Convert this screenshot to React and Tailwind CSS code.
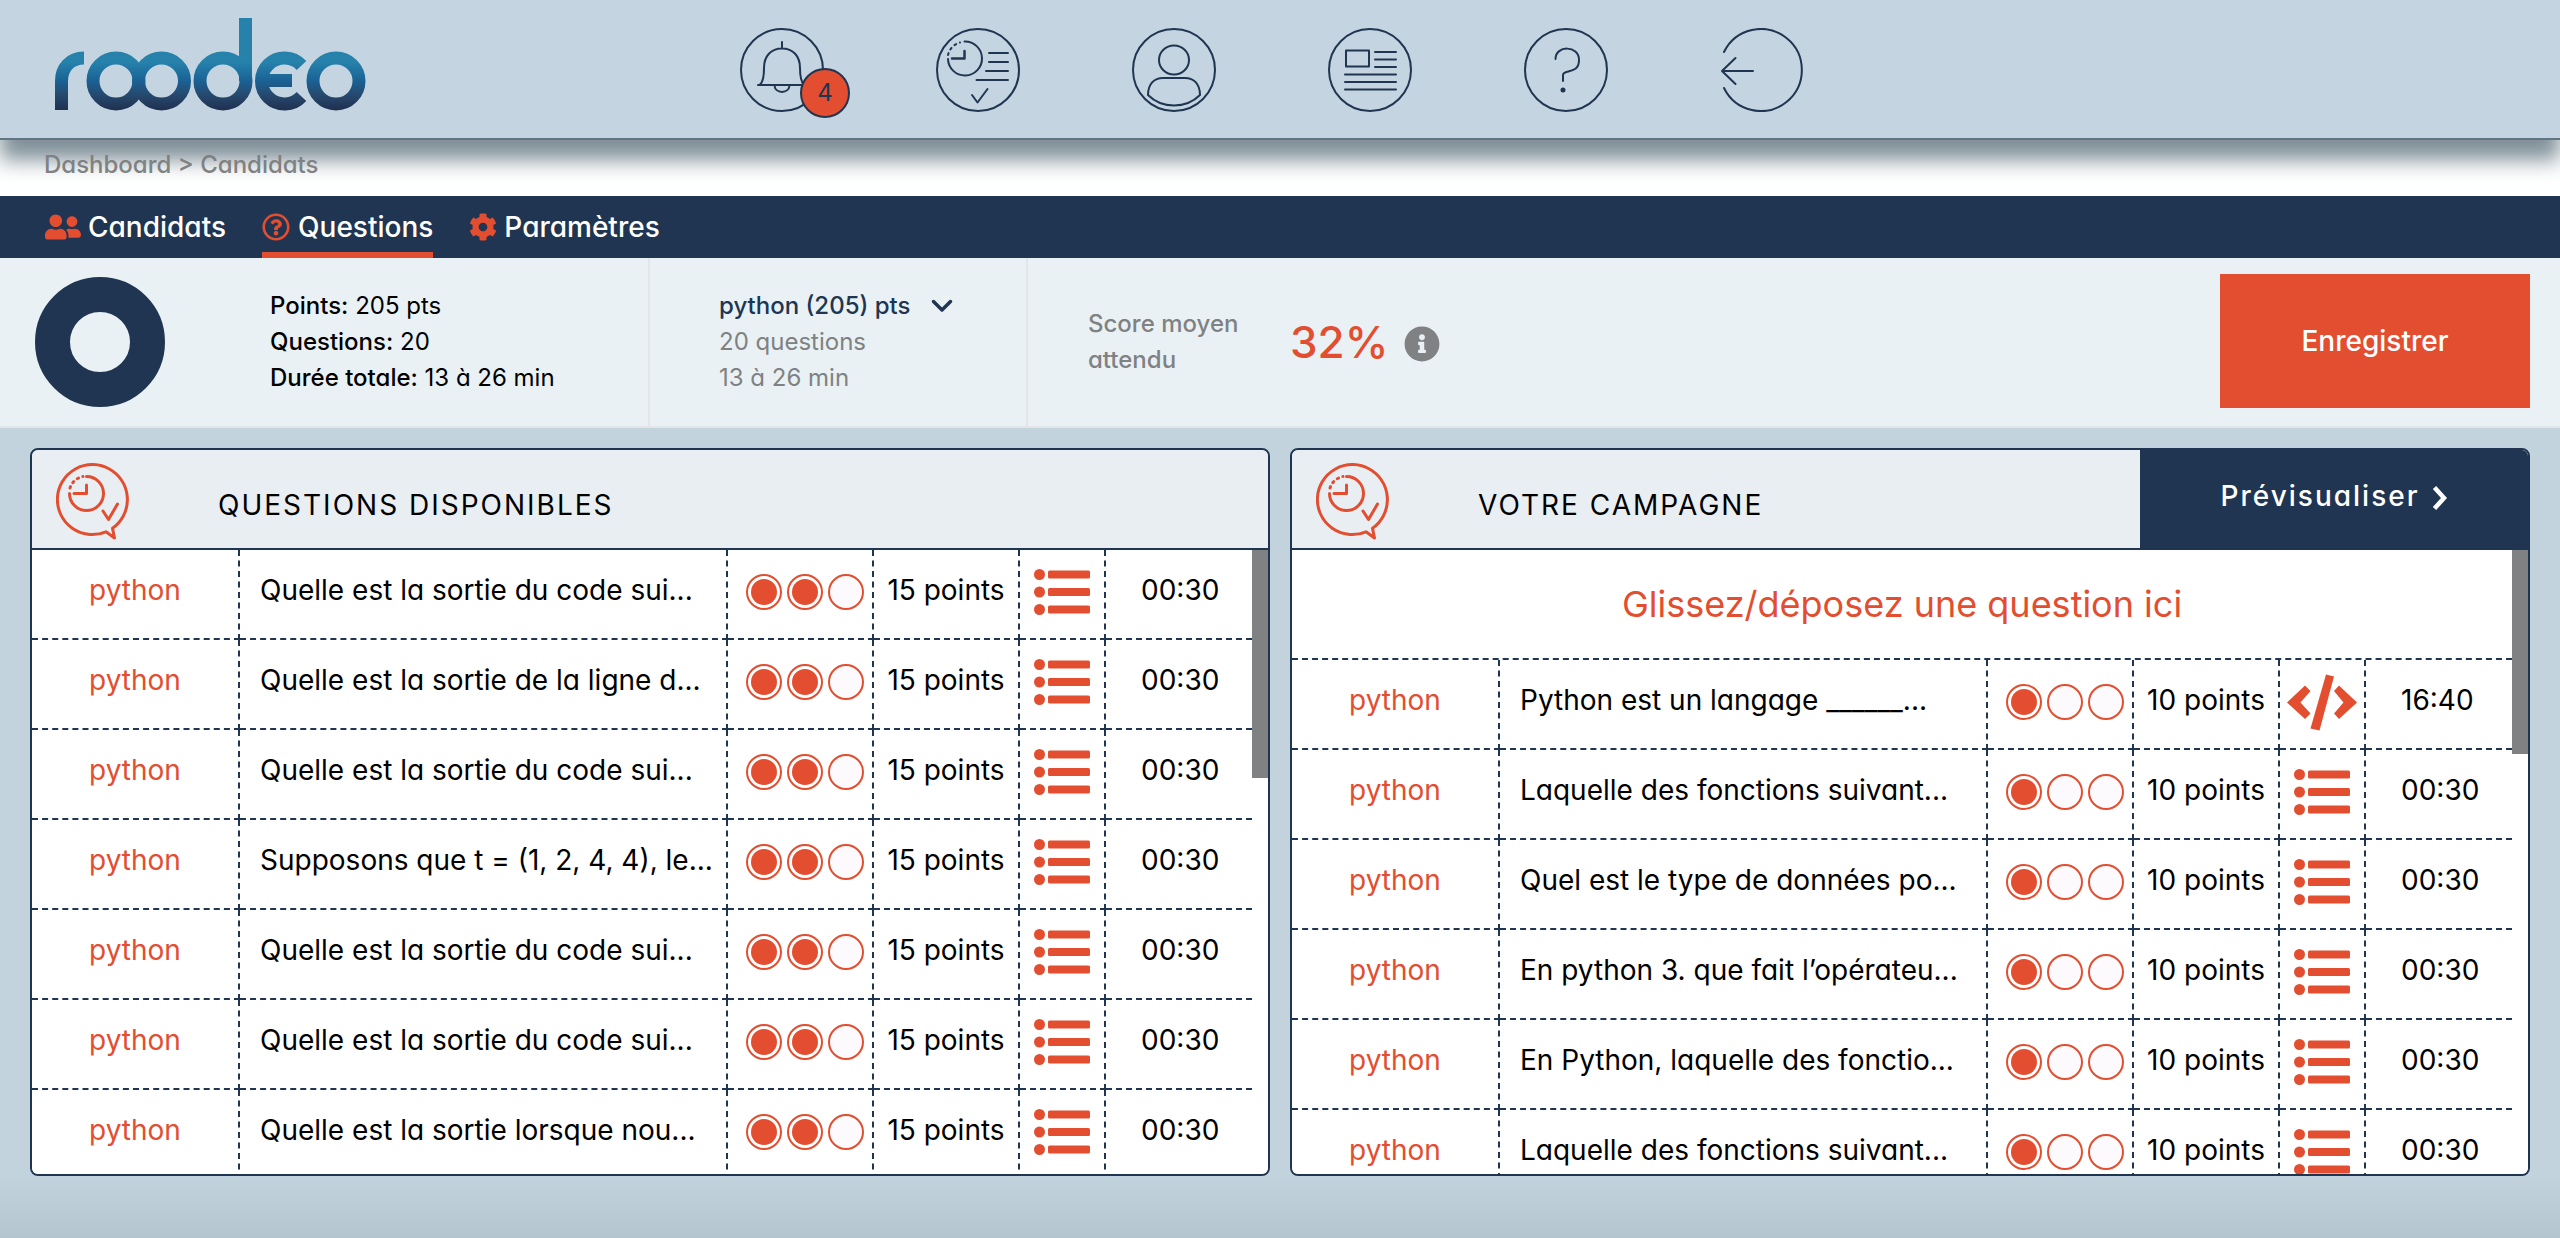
import React from "react";
import { FaCog, FaInfoCircle, FaUserFriends, FaRegQuestionCircle } from "react-icons/fa";

const availableQuestions = [
  "Quelle est la sortie du code sui...",
  "Quelle est la sortie de la ligne d...",
  "Quelle est la sortie du code sui...",
  "Supposons que t = (1, 2, 4, 4), le...",
  "Quelle est la sortie du code sui...",
  "Quelle est la sortie du code sui...",
  "Quelle est la sortie lorsque nou...",
].map((text) => ({ text, level: 2, points: "15 points", type: "list", time: "00:30" }));

const campaignQuestions = [
  { text: "Python est un langage ______...", type: "code", time: "16:40" },
  { text: "Laquelle des fonctions suivant...", type: "list", time: "00:30" },
  { text: "Quel est le type de données po...", type: "list", time: "00:30" },
  { text: "En python 3. que fait l’opérateu...", type: "list", time: "00:30" },
  { text: "En Python, laquelle des fonctio...", type: "list", time: "00:30" },
  { text: "Laquelle des fonctions suivant...", type: "list", time: "00:30" },
].map((q) => ({ ...q, level: 1, points: "10 points" }));

function Logo() {
  return (
    <svg viewBox="0 0 312 94" className="h-[94px] w-[312px]" role="img" aria-label="roodeo">
      <defs>
        <linearGradient id="logoFill" gradientUnits="userSpaceOnUse" x1="0" y1="34" x2="0" y2="92">
          <stop offset="0.2" stopColor="#2681ab" />
          <stop offset="0.5" stopColor="#1a6396" />
          <stop offset="0.75" stopColor="#264a6f" />
          <stop offset="1" stopColor="#203252" />
        </linearGradient>
      </defs>
      <g fill="none" stroke="url(#logoFill)" strokeWidth="13">
        <path d="M7.5 93V64C7.5 51 16 41 30 41" />
        <circle cx="62" cy="64" r="23" />
        <circle cx="107.5" cy="64" r="23" />
        <circle cx="169" cy="64" r="23" />
        <path d="M247.5 48.500A23 23 0 1 0 247.5 79.500" />
        <circle cx="282" cy="64" r="23" />
      </g>
      <rect x="185" y="1" width="13" height="63" fill="url(#logoFill)" />
      <rect x="206" y="57" width="32" height="13" fill="url(#logoFill)" />
    </svg>
  );
}

function RoundIcon({ children, open = false }) {
  return (
    <svg
      viewBox="0 0 84 84"
      className="size-[84px]"
      fill="none"
      stroke="#203551"
      strokeWidth="2"
      strokeLinecap="round"
      strokeLinejoin="round"
      aria-hidden="true"
    >
      {open ? <path d="M4 24A41 41 0 1 1 4 60" /> : <circle cx="42" cy="42" r="41" />}
      {children}
    </svg>
  );
}

const headerIcons = [
  {
    label: "Notifications",
    badge: "4",
    art: (
      <>
        <path d="M42 14V20M18 57H66M42 20.5C31 20.5 24 28 24 40C24 50 23 54 20 56.5M42 20.5C53 20.5 60 28 60 40C60 50 61 54 64 56.5" />
        <path d="M34.5 57.5C35 66 49 66 49.5 57.5" />
      </>
    ),
  },
  {
    label: "Tests",
    art: (
      <>
        <path d="M28.5 13.5A17 17 0 1 1 12 31" />
        <path d="M12 27A17 17 0 0 1 24 14.5" strokeDasharray="2 4" />
        <path d="M28.5 23V30.5H16" strokeWidth="2.5" />
        <path d="M53 25H72M53 34H72M50 43H72M40.5 52H72" />
        <path d="M36 67L41.5 74.5L51.5 61" />
      </>
    ),
  },
  {
    label: "Profil",
    art: (
      <>
        <ellipse cx="42" cy="32" rx="15" ry="14.5" />
        <path d="M16 67C16 56 22 50 31 50H53C62 50 68 56 68 67C54 81 30 81 16 67Z" />
      </>
    ),
  },
  {
    label: "Actualités",
    art: (
      <path d="M18 22.5H41V38.5H18ZM47 24H68M47 31.5H68M47 39H68M17 46.5H68M17 54H68M17 61.5H68" />
    ),
  },
  {
    label: "Aide",
    art: (
      <>
        <path d="M31.5 31C31.5 17 55 17 55 32C55 47 39 41 39 47V53" />
        <circle cx="39" cy="62" r="1.5" fill="#203551" />
      </>
    ),
  },
  {
    label: "Déconnexion",
    open: true,
    art: <path d="M33 43H2M15.5 30L2 43L15.5 56" />,
  },
];

function BubbleIcon() {
  return (
    <svg
      viewBox="0 0 74 78"
      className="h-[78px] w-[74px]"
      fill="none"
      stroke="#e24e2f"
      strokeWidth="3"
      strokeLinecap="round"
      strokeLinejoin="round"
      aria-hidden="true"
    >
      <path d="M50 69.8A35 35 0 1 1 56.5 66.2L58.5 76Z" />
      <path d="M30.5 14.5A17 17 0 1 1 13.5 31.5" />
      <path d="M14 26A17 17 0 0 1 27 14.5" strokeDasharray="1.5 4.5" />
      <path d="M30.5 23V31.5H18M47 49L52.5 57.5L61.5 42" />
    </svg>
  );
}

function ListIcon() {
  return (
    <svg viewBox="0 0 56 46" className="h-[46px] w-14" fill="#e24e2f" role="img" aria-label="Choix multiple">
      {[5.5, 23, 40.5].map((y) => (
        <g key={y}>
          <circle cx="5.5" cy={y} r="5.5" />
          <rect x="14" y={y - 4} width="42" height="8" rx="1.5" />
        </g>
      ))}
    </svg>
  );
}

function CodeIcon() {
  return (
    <svg viewBox="0 0 70 58" className="h-[58px] w-[70px]" fill="#e24e2f" role="img" aria-label="Code">
      <path d="M39 1.5L47 3.5L32.5 57.5L23.5 55.5Z" />
      <path d="M18 12.5L23.5 18L13.5 29.5L23.5 40.5L18 46L0 29.5Z" />
      <path d="M52 12.5L47 18L56.5 29.5L47 40.5L52 46L70 29.5Z" />
    </svg>
  );
}

function Level({ value }) {
  return (
    <div className="flex items-center gap-[5px]" role="img" aria-label={`Difficulté ${value} sur 3`}>
      {[1, 2, 3].map((n) => (
        <span
          key={n}
          className={
            n <= value
              ? "flex size-9 items-center justify-center rounded-full border-2 border-[#e24e2f] bg-white"
              : "flex size-9 items-center justify-center rounded-full border-2 border-[#e24e2f] bg-[#fcfafc]"
          }
        >
          {n <= value && <span className="size-[26px] rounded-full bg-[#e24e2f]" />}
        </span>
      ))}
    </div>
  );
}

const cell = "h-[90px] border-b-2 border-r-2 border-dashed border-[#203551] p-0";

function QuestionTable({ label, rows, dropText }) {
  return (
    <div className="flex min-h-0 flex-1 items-start overflow-hidden bg-white">
      <table
        aria-label={label}
        className="min-w-0 flex-1 table-fixed border-separate border-spacing-0 text-[28px] leading-[42px] whitespace-nowrap"
      >
        <colgroup>
          <col className="w-[208px]" />
          <col />
          <col className="w-[146px]" />
          <col className="w-[146px]" />
          <col className="w-[86px]" />
          <col className="w-[146px]" />
        </colgroup>
        <tbody>
          {dropText && (
            <tr>
              <td
                colSpan={6}
                className="h-[110px] border-b-2 border-dashed border-[#203551] p-0 text-center text-4xl text-[#e24e2f]"
              >
                {dropText}
              </td>
            </tr>
          )}
          {rows.map((row, i) => (
            <tr key={i}>
              <td className={`${cell} pb-2 text-center text-[#e24e2f]`}>python</td>
              <td className={`${cell} overflow-hidden pb-2 pl-5`}>{row.text}</td>
              <td className={`${cell} pb-1 pl-[18px]`}>
                <Level value={row.level} />
              </td>
              <td className={`${cell} pb-2 text-center`}>{row.points}</td>
              <td className={`${cell} pb-1`}>
                <div className="flex justify-center">{row.type === "code" ? <CodeIcon /> : <ListIcon />}</div>
              </td>
              <td className="h-[90px] border-b-2 border-dashed border-[#203551] p-0 pb-2 pl-[35px]">{row.time}</td>
            </tr>
          ))}
        </tbody>
      </table>
      <div className={dropText ? "h-[204px] w-4 bg-[#808182]" : "h-[228px] w-4 bg-[#808182]"} />
    </div>
  );
}

function Panel({ title, action, children }) {
  return (
    <section className="flex min-h-0 min-w-0 flex-1 flex-col overflow-hidden rounded-lg border-2 border-[#203551]">
      <header className="flex h-[100px] shrink-0 items-stretch border-b-2 border-[#203551] bg-[#e9eef2]">
        <div className="flex flex-1 items-start pt-3 pl-6">
          <BubbleIcon />
          <h2 className="mt-[22px] ml-[88px] text-[28px] leading-[42px] tracking-[2px]">{title}</h2>
        </div>
        {action}
      </header>
      {children}
    </section>
  );
}

const tabs = [
  { label: "Candidats", Icon: FaUserFriends, size: "size-9" },
  { label: "Questions", Icon: FaRegQuestionCircle, size: "size-7", active: true },
  { label: "Paramètres", Icon: FaCog, size: "size-7" },
];

export default function App() {
  return (
    <div className="flex h-screen flex-col bg-[#c2d3dd] font-[Inter,sans-serif] text-black [font-feature-settings:'cv11']">
      <header className="relative z-10 flex h-[140px] shrink-0 items-start border-b-2 border-[#5f7485] bg-[#c4d5e1] shadow-[0_20px_20px_0_#7f8f98]">
        <a href="#accueil" className="mt-[17px] ml-[54px]">
          <Logo />
        </a>
        <nav aria-label="Menu principal" className="mt-7 ml-[374px] flex gap-28">
          {headerIcons.map(({ label, art, open, badge }) => (
            <a key={label} href="#menu" aria-label={label} className="relative">
              <RoundIcon open={open}>{art}</RoundIcon>
              {badge && (
                <span className="absolute top-10 left-[60px] flex size-[50px] items-center justify-center rounded-full border-2 border-[#203551] bg-[#e24e2f] text-2xl text-[#203551]">
                  {badge}
                </span>
              )}
            </a>
          ))}
        </nav>
      </header>

      <div className="h-14 shrink-0 bg-white">
        <div className="relative z-20 pt-[7px] pl-11 text-2xl leading-9 font-medium text-[#808182]">
          <a href="#dashboard">Dashboard</a> &gt; <a href="#candidats">Candidats</a>
        </div>
      </div>

      <nav
        aria-label="Campagne"
        className="relative z-20 flex h-[62px] shrink-0 gap-9 bg-[#203551] pl-[45px] text-[28px] font-medium text-white"
      >
        {tabs.map(({ label, Icon, size, active }) => (
          <a
            key={label}
            href="#onglet"
            aria-current={active ? "page" : undefined}
            className={
              active
                ? "flex items-center gap-2 border-b-[6px] border-[#e24e2f] pt-1.5"
                : "flex items-center gap-[7px]"
            }
          >
            <Icon className={`${size} text-[#e24e2f]`} aria-hidden="true" />
            {label}
          </a>
        ))}
      </nav>

      <section className="flex h-[170px] shrink-0 border-b-2 border-[#e3e5e6] bg-[#e9f1f4] text-2xl leading-9">
        <div className="flex w-[650px] items-center border-r-2 border-[#e3e5e6] pl-[35px]">
          <svg viewBox="0 0 130 130" className="size-[130px]" role="img" aria-label="Répartition des points">
            <circle cx="65" cy="65" r="47.5" fill="none" stroke="#203551" strokeWidth="35" />
          </svg>
          <div className="ml-[105px]">
            <p><span className="font-medium">Points:</span> 205 pts</p>
            <p><span className="font-medium">Questions:</span> 20</p>
            <p><span className="font-medium">Durée totale:</span> 13 à 26 min</p>
          </div>
        </div>
        <div className="flex w-[378px] flex-col justify-center border-r-2 border-[#e3e5e6] pl-[69px] text-[#808182]">
          <label className="flex items-center gap-5 font-medium text-[#203551]">
            <select aria-label="Technologie" className="appearance-none bg-transparent">
              <option>python (205) pts</option>
            </select>
            <svg viewBox="0 0 22 14" className="h-3.5 w-[22px]" fill="none" stroke="#203551" strokeWidth="3.5" strokeLinecap="round" strokeLinejoin="round" aria-hidden="true">
              <path d="M2.5 2.5L11 11L19.5 2.5" />
            </svg>
          </label>
          <p>20 questions</p>
          <p>13 à 26 min</p>
        </div>
        <div className="flex flex-1 items-center pl-[60px]">
          <p className="w-[202px] font-medium text-[#808182]">Score moyen<br />attendu</p>
          <strong className="text-[44px] font-medium text-[#e24e2f]">32%</strong>
          <button type="button" aria-label="Information" className="mt-1 ml-4 text-[#808182]">
            <FaInfoCircle className="size-9" />
          </button>
        </div>
        <button type="button" className="mt-4 mr-[30px] h-[134px] w-[310px] bg-[#e24e2f] text-[28px] font-medium text-white">
          Enregistrer
        </button>
      </section>

      <main className="flex min-h-0 flex-1 gap-5 bg-linear-to-t from-[#b4c5cf] to-[#c2d3dd] to-[64px] px-[30px] pt-5 pb-[62px]">
        <Panel title="QUESTIONS DISPONIBLES">
          <QuestionTable label="Questions disponibles" rows={availableQuestions} />
        </Panel>
        <Panel
          title="VOTRE CAMPAGNE"
          action={
            <button
              type="button"
              className="flex w-[388px] items-center justify-center gap-3 bg-[#203551] pb-1.5 text-[28px] font-medium tracking-[2px] text-white"
            >
              Prévisualiser
              <svg viewBox="0 0 16 26" className="mt-1 h-[26px] w-4" fill="none" stroke="white" strokeWidth="4.5" aria-hidden="true">
                <path d="M2.5 2.5L12 13L2.5 23.5" />
              </svg>
            </button>
          }
        >
          <QuestionTable
            label="Votre campagne"
            rows={campaignQuestions}
            dropText="Glissez/déposez une question ici"
          />
        </Panel>
      </main>
    </div>
  );
}
